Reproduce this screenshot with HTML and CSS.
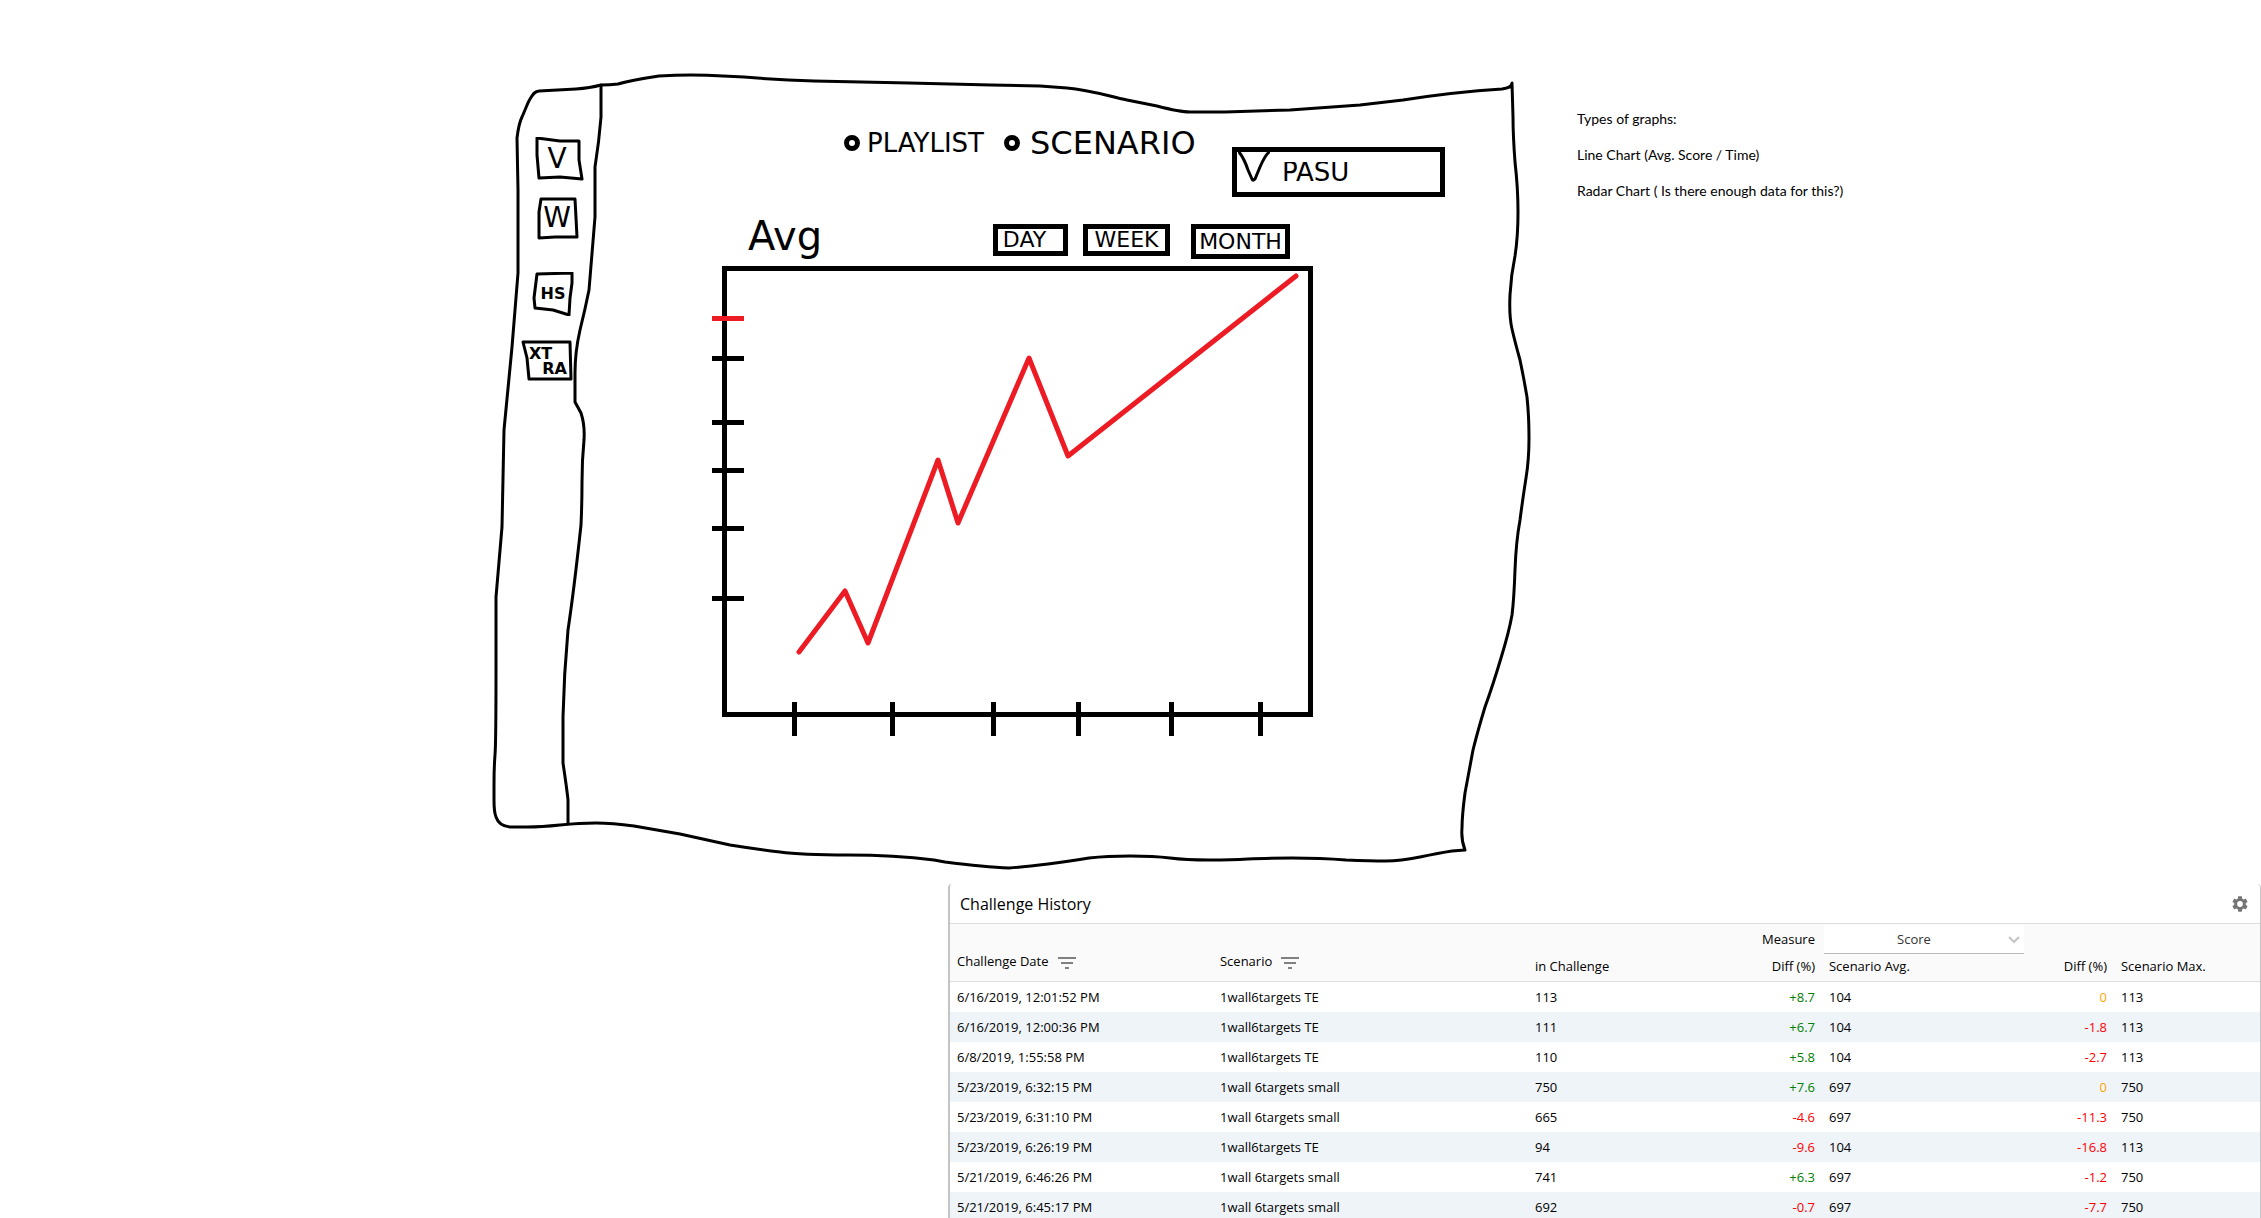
FILE: index.html
```html
<!DOCTYPE html>
<html lang="en">
<head>
<meta charset="utf-8">
<title>Challenge History</title>
<link rel="stylesheet" href="styles.css">
</head>
<body>
<div class="page">
  <section class="top">
    <div class="sketch">
      <svg class="frame" viewBox="490 70 1044 804" preserveAspectRatio="none" aria-hidden="true">
        <path d="M539 91Q558 90 576 89 590 88 601 85 610 85 618 84 632 80 659 76 691 74 723 76L744 77Q780 80 814 81L909 83 991 85 1040 86 1067 88C1090 90 1108 96 1127 100L1157 106Q1180 112 1190 112H1225L1290 110 1360 105 1403 100C1435 95 1470 91 1502 89 1508 88 1512 87 1512 83L1513 117Q1513 135 1515 162 1518 188 1518 212 1518 237 1515 256 1511 275 1510 295 1509 316 1512 329 1515 342 1520 360 1524 379 1527 397 1529 416 1529 438 1529 460 1526 478 1523 497 1520 520 1516 542 1515 570 1514 599 1512 615 1509 632 1501 658 1493 685 1485 707 1478 730 1473 750 1469 771 1465 793 1462 816 1462 828 1461 840 1465 850L1452 851Q1439 853 1420 857 1400 861 1386 861 1371 861 1346 860 1321 858 1292 858 1264 858 1248 859 1232 860 1209 860 1186 860 1170 858 1154 856 1130 856 1107 856 1089 858 1071 861 1048 864 1025 867 1009 868 985 867 945 862L934 860Q894 855 848 855 801 855 780 852 755 849 730 845L680 834 634 826Q612 823 596 823 580 823 560 825 541 827 527 827H512C502 827 498 823 496 817 494 812 494 808 494 800V785Q494 767 495 755 496 743 496 670V597Q499 562 502 527 503 478 504 430 508 388 512 347 515 310 518 273V190L517 138C518 130 519 123 522 117 526 108 528 102 530 99 533 94 535 91 539 91Z"/>
        <path d="M601 85V117Q599 142 595 167V217Q592 254 589 290 585 310 580 330 575 352 575 373V402L581 413Q585 425 584 440 582 460 582 482 582 503 581 525 574 590 568 630 564 674 563 717V763Q567 790 568 800V824"/>
      </svg>
      <nav class="side">
        <button class="tile" type="button"><svg viewBox="521 137 64 44" aria-hidden="true"><path d="M537 138L560 141 579 141V160L582 179 560 177 539 178 537 155Z"/></svg><span>V</span></button>
        <button class="tile" type="button"><svg viewBox="521 196 64 44" aria-hidden="true"><path d="M541 199H575L577 237H555L539 238V212Z"/></svg><span>W</span></button>
        <button class="tile small high-score" type="button"><svg viewBox="521 272 64 44" aria-hidden="true"><path d="M537 274L572 273 572 283 570 298 569 315 553 310 535 308 534 298Z"/></svg><span>HS</span></button>
        <button class="tile small extra" type="button"><svg viewBox="521 339 64 44" aria-hidden="true"><path d="M523 342H570L571 379H529L527 358Z"/></svg><span>XT</span><span>RA</span></button>
      </nav>
      <main class="main">
        <div class="filters">
          <label class="choice playlist"><input type="radio" name="kind">PLAYLIST</label>
          <label class="choice scenario"><input type="radio" name="kind">SCENARIO</label>
          <div class="picker">
            <select aria-label="Scenario"><option>PASU</option></select>
            <svg viewBox="0 0 32 31" aria-hidden="true"><path d="M1 1C6 7 8 13 10 19L14 28C15 30 16 29 17 28L22 16C25 9 28 4 31 1"/></svg>
          </div>
        </div>
        <div class="chart-head">
          <h2>Avg</h2>
          <div class="ranges">
            <button class="day" type="button">DAY</button>
            <button class="week" type="button">WEEK</button>
            <button class="month" type="button">MONTH</button>
          </div>
        </div>
        <svg class="chart" viewBox="710 264 606 474" role="img" aria-label="Average score over time">
          <path d="M724.5 268.5H1310.5V714.5H724.5Z"/>
          <path d="M712 358.500H744M712 422.500H744M712 470.500H744M712 528.500H744M712 598.500H744"/>
          <path d="M794.500 702V736M892.500 702V736M993.500 702V736M1078.500 702V736M1171.500 702V736M1260.500 702V736"/>
          <path class="red" d="M712 318.500H744"/>
          <path class="red line" d="M799 652L845 591 868 643 938 460 958 523 1029 358 1068 456 1296 276"/>
        </svg>
      </main>
    </div>
    <aside class="notes">
      <p>Types of graphs:</p>
      <p>Line Chart (Avg. Score / Time)</p>
      <p>Radar Chart ( Is there enough data for this?)</p>
    </aside>
  </section>

  <section class="panel">
    <header class="panel-head">
      <h1>Challenge History</h1>
      <button class="gear" type="button" aria-label="Settings"><svg viewBox="2 2 20 20" aria-hidden="true"><path d="M19.140 12.940c.04-.3.06-.61.06-.94 0-.32-.02-.64-.07-.94l2.030-1.580c.18-.14.23-.41.12-.61l-1.920-3.320c-.12-.22-.37-.29-.59-.22l-2.390.96c-.5-.38-1.030-.7-1.620-.94l-.36-2.540c-.04-.24-.24-.41-.48-.41h-3.840c-.24 0-.43.17-.47.41l-.36 2.540c-.59.24-1.130.57-1.620.94l-2.390-.96c-.22-.08-.47 0-.59.22L2.740 8.870c-.12.21-.08.47.12.61l2.030 1.580c-.05.3-.09.63-.09.94s.02.64.07.94l-2.030 1.580c-.18.14-.23.41-.12.61l1.920 3.320c.12.22.37.29.59.22l2.390-.96c.5.38 1.030.7 1.620.94l.36 2.540c.05.24.24.41.48.41h3.840c.24 0 .44-.17.47-.41l.36-2.540c.59-.24 1.130-.56 1.620-.94l2.390.96c.22.08.47 0 .59-.22l1.920-3.320c.12-.22.07-.47-.12-.61l-2.010-1.580zM12 15.600a3.600 3.600 0 1 1 0-7.200 3.600 3.600 0 0 1 0 7.200z"/></svg></button>
    </header>
    <table>
      <colgroup><col class="c-date"><col class="c-name"><col class="c-value"><col class="c-diff"><col class="c-avg"><col class="c-diff"><col></colgroup>
      <thead>
        <tr class="measure">
          <th rowspan="2" class="tall">Challenge Date<svg viewBox="0 0 24 24" aria-hidden="true"><path d="M10 18h4v-2h-4v2zM3 6v2h18V6H3zm3 7h12v-2H6v2z"/></svg></th>
          <th rowspan="2" class="tall">Scenario<svg viewBox="0 0 24 24" aria-hidden="true"><path d="M10 18h4v-2h-4v2zM3 6v2h18V6H3zm3 7h12v-2H6v2z"/></svg></th>
          <th colspan="2" class="num"><label for="measure">Measure</label></th>
          <th colspan="3" class="pick"><div class="measure-box"><select id="measure"><option>Score</option></select><svg viewBox="0 0 12 8" aria-hidden="true"><path d="M1 1l5 5 5-5"/></svg></div></th>
        </tr>
        <tr class="names"><th>in Challenge</th><th class="num">Diff (%)</th><th>Scenario Avg.</th><th class="num">Diff (%)</th><th>Scenario Max.</th></tr>
      </thead>
      <tbody>
        <tr><td>6/16/2019, 12:01:52 PM</td><td>1wall6targets TE</td><td>113</td><td class="num up">+8.7</td><td>104</td><td class="num even">0</td><td>113</td></tr>
        <tr><td>6/16/2019, 12:00:36 PM</td><td>1wall6targets TE</td><td>111</td><td class="num up">+6.7</td><td>104</td><td class="num down">-1.8</td><td>113</td></tr>
        <tr><td>6/8/2019, 1:55:58 PM</td><td>1wall6targets TE</td><td>110</td><td class="num up">+5.8</td><td>104</td><td class="num down">-2.7</td><td>113</td></tr>
        <tr><td>5/23/2019, 6:32:15 PM</td><td>1wall 6targets small</td><td>750</td><td class="num up">+7.6</td><td>697</td><td class="num even">0</td><td>750</td></tr>
        <tr><td>5/23/2019, 6:31:10 PM</td><td>1wall 6targets small</td><td>665</td><td class="num down">-4.6</td><td>697</td><td class="num down">-11.3</td><td>750</td></tr>
        <tr><td>5/23/2019, 6:26:19 PM</td><td>1wall6targets TE</td><td>94</td><td class="num down">-9.6</td><td>104</td><td class="num down">-16.8</td><td>113</td></tr>
        <tr><td>5/21/2019, 6:46:26 PM</td><td>1wall 6targets small</td><td>741</td><td class="num up">+6.3</td><td>697</td><td class="num down">-1.2</td><td>750</td></tr>
        <tr><td>5/21/2019, 6:45:17 PM</td><td>1wall 6targets small</td><td>692</td><td class="num down">-0.7</td><td>697</td><td class="num down">-7.7</td><td>750</td></tr>
      </tbody>
    </table>
  </section>
</div>
</body>
</html>
```
FILE: styles.css
```css
* { box-sizing: border-box; }
body { margin: 0; background: #fff; color: #000; font: 13px/20px "Open Sans", "Noto Sans", sans-serif; }
h1, h2, p { margin: 0; font-weight: 400; }
button, select { margin: 0; padding: 0; color: inherit; font: inherit; background: #fff; border: 0; appearance: none; }

.page { display: flex; flex-direction: column; height: 100vh; overflow: hidden; }
.top { display: grid; flex: none; grid-template-columns: 490fr minmax(1044px, 1044fr) 727fr; padding: 70px 0 10px; }

/* hand-drawn mockup */
.sketch { grid-column: 2; position: relative; display: flex; min-height: 804px; font-family: "DejaVu Sans", sans-serif; }
.sketch svg { fill: none; stroke: #000; stroke-width: 3; stroke-linecap: round; stroke-linejoin: round; }
.frame { position: absolute; inset: 0; width: 100%; height: 100%; }
.side { position: relative; display: flex; flex-direction: column; flex: none; width: 112px; padding: 67px 0 0 31px; gap: 15px; }
.tile { position: relative; width: 64px; height: 44px; padding-left: 8px; background: none; font-size: 28px; line-height: 44px; }
.tile svg { position: absolute; inset: 0; width: 64px; height: 44px; }
.small { padding-left: 0; font-size: 16px; font-weight: 700; }
.high-score { margin-top: 17px; }
.extra { display: grid; align-content: center; margin-top: 8px; padding: 0 18px 0 8px; line-height: 15px; text-align: left; }
.extra span:last-child { text-align: right; }

.main { position: relative; flex: 1; padding: 50px 89px 0 108px; }
.filters { display: grid; grid-template-columns: 160px 228px 213px; justify-content: end; align-items: start; }
.choice { display: flex; align-items: center; gap: 7px; height: 46px; }
.choice input { width: 16px; height: 16px; margin: 0; border: 5px solid #000; border-radius: 50%; appearance: none; }
.playlist { font-size: 26px; }
.scenario { gap: 10px; font-size: 32px; }
.picker { position: relative; margin-top: 27px; }
.picker select { width: 100%; height: 50px; padding: 0 45px; border: 5px solid #000; font-size: 26px; }
.picker svg { position: absolute; left: 6px; top: 4px; width: 32px; height: 31px; }
.chart-head { display: flex; justify-content: space-between; width: 606px; height: 40px; margin-top: 27px; padding: 0 26px 0 38px; }
.chart-head h2 { font-size: 40px; line-height: 24px; }
.ranges { display: flex; align-items: flex-start; }
.ranges button { height: 32px; border: 5px solid #000; font-size: 22px; line-height: 20px; }
.ranges .day { width: 75px; padding-right: 12px; }
.ranges .week { width: 87px; margin-left: 15px; }
.ranges .month { width: 99px; height: 35px; margin-left: 21px; }
.chart { display: block; width: 606px; height: 474px; }
.sketch .chart { stroke-width: 5; stroke-linecap: butt; stroke-linejoin: miter; }
.chart .red { stroke: #ed1c24; }
.chart .line { stroke-linecap: round; stroke-linejoin: round; }

.notes { display: flex; flex-direction: column; gap: 16px; padding: 39px 0 0 43px; font: 14px/20px Lato, sans-serif; }

/* results table */
.panel { flex: 1; min-height: 0; margin-left: calc(100% * 948 / 2261); overflow: hidden; border: solid #c4c4c4; border-width: 0 1px 0 2px; border-radius: 4px 4px 0 0; }
.panel-head { display: flex; align-items: center; justify-content: space-between; height: 40px; padding: 0 12px 0 10px; border-bottom: 1px solid #ddd; }
h1 { font-size: 16px; line-height: 24px; }
.gear svg { display: block; width: 16px; height: 16px; fill: #757575; }
table { width: 100%; table-layout: fixed; border-collapse: separate; border-spacing: 0; }
.c-date { width: 263px; }
.c-name { width: 315px; }
.c-value { width: 189px; }
.c-diff { width: 105px; }
.c-avg { width: 187px; }
th, td { height: 30px; padding: 0 7px; font-weight: 400; text-align: left; white-space: nowrap; }
thead { background: #fafafa; }
.tall, .names th { border-bottom: 1px solid #ddd; }
.tall { padding-top: 20px; }
.names th { height: 28px; padding-bottom: 4px; }
.tall svg { width: 24px; height: 24px; margin-left: 6px; vertical-align: middle; fill: #808080; }
.num { text-align: right; }
.pick { padding: 0 2px; }
.measure-box { position: relative; width: 200px; }
.measure-box select { display: block; width: 100%; height: 29px; padding-right: 20px; border-bottom: 1px solid #bbb; color: #333; text-align: center; text-align-last: center; }
.measure-box svg { position: absolute; right: 4px; top: 11px; width: 12px; height: 8px; fill: none; stroke: #c4c4c4; stroke-width: 2; }
tbody tr:nth-child(even) { background: #eff4f8; }
.up { color: #008000; }
.down { color: #f00; }
.even { color: #ffa500; }
```
